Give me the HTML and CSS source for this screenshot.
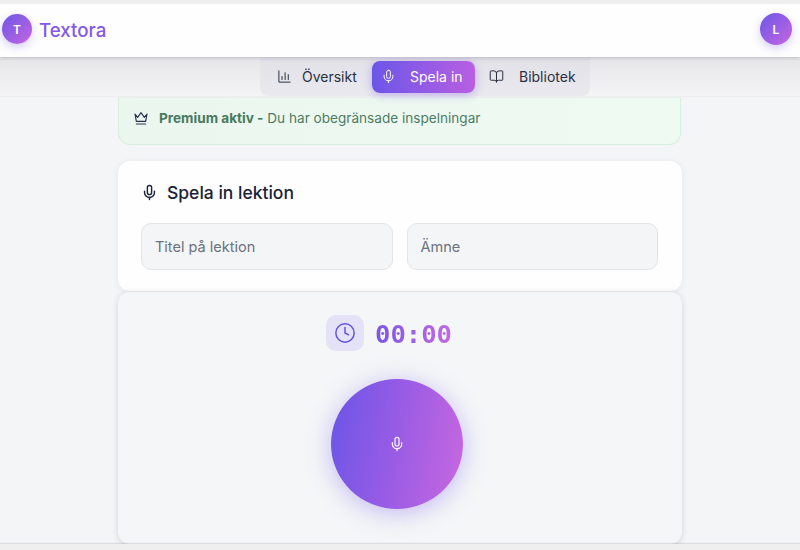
FILE: index.html
```html
<!DOCTYPE html>
<html lang="sv">
<head>
    <meta charset="UTF-8">
    <title>Textora</title>
    <link rel="stylesheet" href="styles.css">
</head>
<body>
    <header class="topbar">
        <div class="brand">
            <div class="avatar avatar-small">T</div>
            <span class="brand-name">Textora</span>
        </div>
        <div class="avatar">L</div>
    </header>

    <div class="nav-strip">
        <nav class="tabs">
            <a class="tab">
                <svg class="icon" viewBox="0 0 24 24"><path d="M3 3v18h18"/><path d="M8 17v-5"/><path d="M13 17V6"/><path d="M18 17V9"/></svg>
                Översikt
            </a>
            <a class="tab tab-active">
                <svg class="icon" viewBox="0 0 24 24"><rect x="9" y="2" width="6" height="13" rx="3"/><path d="M19 10v2a7 7 0 0 1-14 0v-2"/><path d="M12 19v3"/></svg>
                Spela in
            </a>
            <a class="tab">
                <svg class="icon" viewBox="0 0 24 24"><path d="M12 7v14"/><path d="M3 18a1 1 0 0 1-1-1V4a1 1 0 0 1 1-1h5a4 4 0 0 1 4 4 4 4 0 0 1 4-4h5a1 1 0 0 1 1 1v13a1 1 0 0 1-1 1h-6a3 3 0 0 0-3 3 3 3 0 0 0-3-3z"/></svg>
                Bibliotek
            </a>
        </nav>
    </div>

    <main class="content">
        <div class="notice">
            <svg class="icon crown" viewBox="0 0 24 24"><path d="M3 6l4 5 5-7 5 7 4-5-2 11H5z"/><path d="M5 21h14"/></svg>
            <p><strong>Premium aktiv -</strong> Du har obegränsade inspelningar</p>
        </div>

        <section class="card">
            <h2 class="card-title">
                <svg class="icon title-icon" viewBox="0 0 24 24"><rect x="9" y="2" width="6" height="13" rx="3"/><path d="M19 10v2a7 7 0 0 1-14 0v-2"/><path d="M12 19v3"/></svg>
                Spela in lektion
            </h2>
            <div class="fields">
                <input class="field" placeholder="Titel på lektion">
                <input class="field" placeholder="Ämne">
            </div>
        </section>

        <section class="recorder">
            <div class="time-row">
                <div class="clock-box">
                    <svg class="icon clock" viewBox="0 0 24 24"><circle cx="12" cy="12" r="10"/><path d="M12 6v6l4 2"/></svg>
                </div>
                <span class="time">00:00</span>
            </div>
            <button class="record-btn">
                <svg class="icon record-icon" viewBox="0 0 24 24"><rect x="9" y="2" width="6" height="13" rx="3"/><path d="M19 10v2a7 7 0 0 1-14 0v-2"/><path d="M12 19v3"/></svg>
            </button>
        </section>
    </main>
    <div class="page-end"></div>
</body>
</html>
```

FILE: styles.css
```css
html, body {
    height: 100%;
}
body {
    margin: 0;
    height: 550px;
    overflow: hidden;
    border-top: 4px solid #efeff0;
    box-sizing: border-box;
    background: #f4f5f7;
    font-family: Inter, "Noto Sans", sans-serif;
    color: #1c2233;
}
.icon {
    width: 16px;
    height: 16px;
    fill: none;
    stroke: currentColor;
    stroke-width: 2;
    stroke-linecap: round;
    stroke-linejoin: round;
    flex-shrink: 0;
}

/* top */
.topbar {
    height: 53px;
    background: #fefefe;
    box-shadow: 0 1px 4px rgba(40, 40, 60, 0.22);
    display: flex;
    align-items: center;
    justify-content: space-between;
    padding: 0 8px 0 2px;
    position: relative;
    z-index: 2;
}
.brand {
    display: flex;
    align-items: center;
    gap: 7px;
}
.brand-name {
    font-size: 18.7px;
    font-weight: 500;
    color: #8259ea;
}
.avatar {
    width: 32px;
    height: 32px;
    border-radius: 50%;
    background: linear-gradient(135deg, #6c56e8, #c566e0);
    box-shadow: 0 3px 8px rgba(110, 86, 232, 0.3);
    color: #fff;
    font-size: 12px;
    font-weight: 600;
    display: flex;
    align-items: center;
    justify-content: center;
    margin-top: -3px;
}
.avatar-small {
    width: 30px;
    height: 30px;
    margin-top: -3px;
}

/* tabs */
.nav-strip {
    height: 40px;
    background: linear-gradient(180deg, #e6e6e8, #f4f4f6);
    border-bottom: 1px solid #eeeef1;
    box-sizing: border-box;
    padding-left: 260px;
}
.tabs {
    width: 330px;
    height: 39px;
    box-sizing: border-box;
    background: linear-gradient(180deg, #e2e1e8, #eae9ef);
    border-radius: 0 0 8px 8px;
    padding: 4px 5px 3px 5px;
    display: flex;
}
.tab {
    display: flex;
    align-items: center;
    padding-bottom: 2px;
    border-radius: 8px;
    font-size: 14px;
    color: #2a3042;
    white-space: nowrap;
}
.tab .icon {
    width: 15px;
    height: 15px;
    stroke-width: 1.6;
}
.tab:first-child {
    width: 107px;
    box-sizing: border-box;
    padding-left: 12px;
    gap: 10px;
}
.tab:last-child {
    padding-left: 14px;
    gap: 15px;
}
.tab-active {
    width: 103px;
    box-sizing: border-box;
    padding-left: 9px;
    gap: 14px;
    background: linear-gradient(90deg, #6c56e8, #b85fe2);
    color: #fff;
    box-shadow: 0 2px 10px rgba(130, 86, 232, 0.4);
}

/* content */
.content {
    width: 564px;
    margin: 0 auto;
}
.notice {
    height: 48px;
    box-sizing: border-box;
    width: 563px;
    background: linear-gradient(90deg, #ebf6ef, #eefaf2);
    border: 1px solid #d5f0df;
    border-top-color: #e4f3ea;
    border-radius: 0 0 12px 12px;
    display: flex;
    align-items: center;
    gap: 10px;
    padding: 0 13px 7px 14px;
    font-size: 13.6px;
    color: #4d7d64;
}
.notice p {
    margin: 0;
}
.notice strong {
    font-weight: 700;
    color: #487a5e;
}
.crown {
    color: #2a3050;
    stroke-width: 1.7;
}
.card {
    height: 130px;
    box-sizing: border-box;
    margin-top: 16px;
    background: #fefefe;
    border-radius: 12px;
    box-shadow: 0 1px 6px rgba(40, 40, 60, 0.08);
    padding: 19px 24px 0 23px;
}
.card-title {
    margin: 0;
    font-size: 17.5px;
    font-weight: 500;
    color: #1a2238;
    display: flex;
    align-items: center;
    gap: 9px;
    height: 24px;
}
.title-icon {
    width: 17px;
    height: 17px;
}
.fields {
    display: grid;
    grid-template-columns: 1fr 1fr;
    gap: 14px;
    margin-top: 19px;
}
.field {
    height: 47px;
    min-width: 0;
    box-sizing: border-box;
    background: #f4f5f7;
    border: 1px solid #e3e4e8;
    border-radius: 10px;
    padding: 0 14px 0 13px;
    font-family: inherit;
    font-size: 14.5px;
}
.field::placeholder {
    color: #6b7280;
}
.recorder {
    height: 252px;
    box-sizing: border-box;
    margin-top: 1px;
    background: #f5f6f8;
    border-radius: 12px;
    box-shadow: 0 1px 6px rgba(40, 40, 60, 0.16);
    display: flex;
    flex-direction: column;
    align-items: center;
    padding-top: 23px;
}
.time-row {
    display: flex;
    align-items: flex-start;
    gap: 11px;
    margin-right: 22px;
}
.clock-box {
    width: 38px;
    height: 36px;
    border-radius: 10px;
    background: #e5e1f7;
    display: flex;
    align-items: center;
    justify-content: center;
}
.clock {
    width: 22px;
    height: 22px;
    color: #6352e0;
    stroke-width: 1.6;
}
.time {
    font-family: "DejaVu Sans Mono", monospace;
    font-size: 25.6px;
    font-weight: 700;
    line-height: 36px;
    margin-top: 1px;
    margin-bottom: 1px;
    background: linear-gradient(90deg, #7a57e6, #c268e2);
    -webkit-background-clip: text;
    background-clip: text;
    color: transparent;
}
.record-btn {
    width: 132px;
    height: 130px;
    margin-top: 26px;
    margin-right: 6px;
    border: none;
    border-radius: 50%;
    background: linear-gradient(100deg, #6a55e8, #9a5ce4 50%, #c968e0);
    box-shadow: 0 4px 24px rgba(110, 86, 232, 0.38);
    color: #fff;
    display: flex;
    align-items: center;
    justify-content: center;
    padding: 0;
}
.record-icon {
    width: 16px;
    height: 16px;
    stroke-width: 1.8;
}
.page-end {
    height: 6px;
    background: #efeff0;
    box-shadow: 0 -1px 1px rgba(40, 40, 60, 0.12);
}
```
